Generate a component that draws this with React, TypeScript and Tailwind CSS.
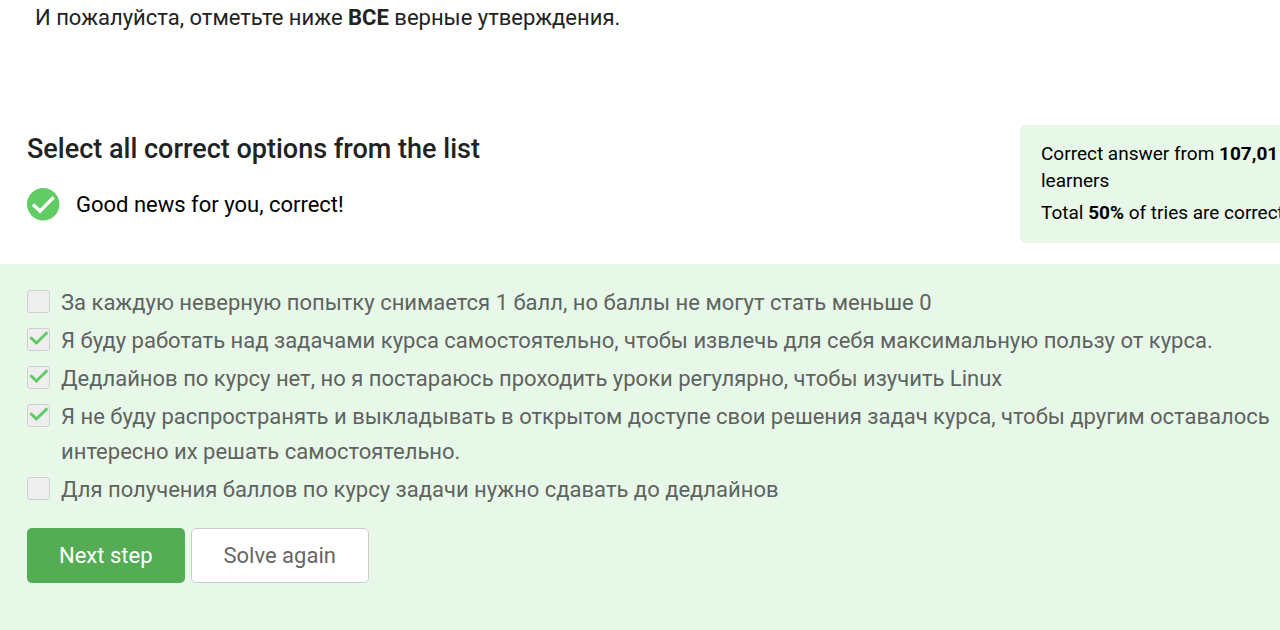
import { useState } from "react";

type Option = { id: string; text: string; checked: boolean };

const initialOptions: Option[] = [
  { id: "penalty", text: "За каждую неверную попытку снимается 1 балл, но баллы не могут стать меньше 0", checked: false },
  { id: "solo", text: "Я буду работать над задачами курса самостоятельно, чтобы извлечь для себя максимальную пользу от курса.", checked: true },
  { id: "regular", text: "Дедлайнов по курсу нет, но я постараюсь проходить уроки регулярно, чтобы изучить Linux", checked: true },
  { id: "share", text: "Я не буду распространять и выкладывать в открытом доступе свои решения задач курса, чтобы другим оставалось интересно их решать самостоятельно.", checked: true },
  { id: "deadline", text: "Для получения баллов по курсу задачи нужно сдавать до дедлайнов", checked: false },
];

function OptionRow({ option, onToggle }: { option: Option; onToggle: () => void }) {
  return (
    <li className="flex items-start gap-[11px]">
      <span className="mt-[5px] grid size-[23px] shrink-0">
        <input
          id={option.id}
          type="checkbox"
          checked={option.checked}
          onChange={onToggle}
          className="col-start-1 row-start-1 size-[23px] appearance-none rounded-[3px] border border-[#d0d0d0] bg-[#eeeeee]"
        />
        {option.checked && (
          <svg viewBox="0 0 23 23" className="pointer-events-none col-start-1 row-start-1 size-[23px]" fill="none" aria-hidden="true">
            <path d="M4.2 10 9.4 15 19.4 5.2" stroke="#61cb64" strokeWidth="3" strokeLinecap="round" />
          </svg>
        )}
      </span>
      <label htmlFor={option.id}>{option.text}</label>
    </li>
  );
}

export default function App() {
  const [options, setOptions] = useState(initialOptions);
  const toggle = (id: string) =>
    setOptions((list) => list.map((o) => (o.id === id ? { ...o, checked: !o.checked } : o)));

  return (
    <main className="flex min-h-screen flex-col overflow-hidden bg-white font-['Roboto',sans-serif] text-[22px] text-[#222222]">
      <p className="px-[35px] leading-[35px]">
        И пожалуйста, отметьте ниже <strong className="font-bold">ВСЕ</strong> верные утверждения.
      </p>

      <section className="mt-[90px] flex items-start justify-between pl-[27px]">
        <div>
          <h1 className="mt-[7px] text-[27px] leading-[34px] font-medium">Select all correct options from the list</h1>
          <div className="mt-[22px] flex items-center gap-4 text-black" role="status">
            <svg viewBox="0 0 33 33" className="size-[33px] shrink-0" fill="none" aria-hidden="true">
              <circle cx="16.2" cy="16.2" r="16.2" fill="#61cb64" />
              <path d="M6 16.6 13 23.2 26.6 9.2" stroke="white" strokeWidth="3.4" />
            </svg>
            <span>Good news for you, correct!</span>
          </div>
        </div>
        <aside className="-mr-10 w-[300px] shrink-0 rounded-[5px] bg-[#e7f8e9] px-[21px] pt-[15px] pb-[17px] text-[19px] leading-[27px] text-black">
          <p>
            Correct answer from <strong className="font-bold">107,01</strong> learners
          </p>
          <p className="mt-[5px] whitespace-nowrap">
            Total <strong className="font-bold">50%</strong> of tries are correct
          </p>
        </aside>
      </section>

      <section className="mt-[21px] grow bg-[#e7f8e9] pt-[21px] pr-2 pl-[27px] text-[#5f635f]">
        <ul className="flex flex-col gap-[3px] leading-[35px]">
          {options.map((option) => (
            <OptionRow key={option.id} option={option} onToggle={() => toggle(option.id)} />
          ))}
        </ul>
        <div className="mt-[21px] flex gap-1.5">
          <button type="button" className="h-[55px] rounded-[5px] bg-[#54ad54] px-8 text-white">
            Next step
          </button>
          <button type="button" className="h-[55px] rounded-[5px] border border-[#cccccc] bg-white px-8 text-[#666666]">
            Solve again
          </button>
        </div>
      </section>
    </main>
  );
}
